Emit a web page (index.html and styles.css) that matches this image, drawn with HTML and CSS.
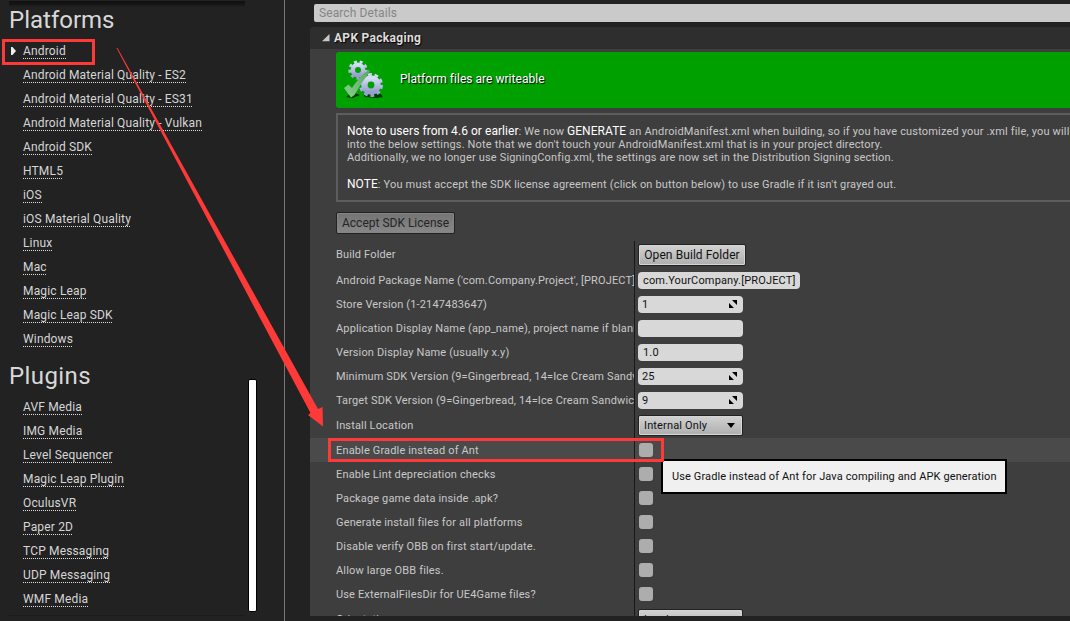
FILE: index.html
```html
<!DOCTYPE html>
<html lang="en">
<head>
<meta charset="utf-8">
<title>Project Settings - Android</title>
<link rel="stylesheet" href="styles.css">
</head>
<body>
<div class="app">
  <nav class="sidebar">
    <div class="nav">
      <h2 class="heading">Platforms</h2>
      <ul class="links">
        <li class="current"><a>Android</a></li>
        <li><a>Android Material Quality - ES2</a></li>
        <li><a>Android Material Quality - ES31</a></li>
        <li><a>Android Material Quality - Vulkan</a></li>
        <li><a>Android SDK</a></li>
        <li><a>HTML5</a></li>
        <li><a>iOS</a></li>
        <li><a>iOS Material Quality</a></li>
        <li><a>Linux</a></li>
        <li><a>Mac</a></li>
        <li><a>Magic Leap</a></li>
        <li><a>Magic Leap SDK</a></li>
        <li><a>Windows</a></li>
      </ul>
      <h2 class="heading">Plugins</h2>
      <ul class="links">
        <li><a>AVF Media</a></li>
        <li><a>IMG Media</a></li>
        <li><a>Level Sequencer</a></li>
        <li><a>Magic Leap Plugin</a></li>
        <li><a>OculusVR</a></li>
        <li><a>Paper 2D</a></li>
        <li><a>TCP Messaging</a></li>
        <li><a>UDP Messaging</a></li>
        <li><a>WMF Media</a></li>
      </ul>
    </div>
    <div class="scroll"><div class="thumb"></div></div>
  </nav>
  <main class="details">
    <div class="search">Search Details</div>
    <section class="category">
      <header class="cat-head">
        <svg class="expander" width="8" height="8" viewBox="0 0 8 8"><path d="M7.5 0V7.3H0Z" fill="#c8c8c8"/></svg>
        <span>APK Packaging</span>
      </header>
      <div class="banner">
        <svg class="gears" width="42" height="42" viewBox="0 0 42 42">
          <defs>
            <linearGradient id="steel" x1="0" y1="0" x2="0" y2="1"><stop offset="0" stop-color="#d5dcf6"/><stop offset="1" stop-color="#969fce"/></linearGradient>
            <linearGradient id="tick" x1="0" y1="1" x2="1" y2="0"><stop offset="0" stop-color="#86cf8c"/><stop offset="1" stop-color="#5da565"/></linearGradient>
          </defs>
          <path d="M3 38 9 33l8 3-7 3ZM20 35l18 0 2 3-6 1-12-1Z" fill="#003c08"/>
          <g fill="none" stroke="url(#steel)">
            <circle cx="15" cy="11" r="5.2" stroke-width="4.4"/>
            <circle cx="15" cy="11" r="8.4" stroke-width="2.6" stroke-dasharray="3 2.865"/>
            <circle cx="28" cy="26" r="6.6" stroke-width="6.4"/>
            <circle cx="28" cy="26" r="10.6" stroke-width="2.8" stroke-dasharray="3.8 2.860"/>
          </g>
          <path d="M1 29 5.500 25.500 9 29Q15 19 26 10.500L27 12.500Q18 24 11.500 36L8 38.500Z" fill="url(#tick)"/>
        </svg>
        <span>Platform files are writeable</span>
      </div>
      <div class="note">
        <p><b>Note to users from 4.6 or earlier</b>: We now <b>GENERATE</b> an AndroidManifest.xml when building, so if you have customized your .xml file, you will need to</p>
        <p>into the below settings. Note that we don't touch your AndroidManifest.xml that is in your project directory.</p>
        <p>Additionally, we no longer use SigningConfig.xml, the settings are now set in the Distribution Signing section.</p>
        <p class="gap"><b>NOTE</b>: You must accept the SDK license agreement (click on button below) to use Gradle if it isn't grayed out.</p>
      </div>
      <button class="btn disabled">Accept SDK License</button>
      <div class="props">
        <div class="row tall"><label>Build Folder</label><div class="val"><button class="btn">Open Build Folder</button></div></div>
        <div class="row"><label>Android Package Name ('com.Company.Project', [PROJECT]</label><div class="val"><div class="field wide">com.YourCompany.[PROJECT]</div></div></div>
        <div class="row"><label>Store Version (1-2147483647)</label><div class="val"><div class="field num">1<svg width="8" height="8" viewBox="0 0 8 8"><path d="M3 0H8V5ZM0 3V8H5Z"/></svg></div></div></div>
        <div class="row"><label>Application Display Name (app_name), project name if blank</label><div class="val"><div class="field"></div></div></div>
        <div class="row"><label>Version Display Name (usually x.y)</label><div class="val"><div class="field">1.0</div></div></div>
        <div class="row"><label>Minimum SDK Version (9=Gingerbread, 14=Ice Cream Sandw</label><div class="val"><div class="field num">25<svg width="8" height="8" viewBox="0 0 8 8"><path d="M3 0H8V5ZM0 3V8H5Z"/></svg></div></div></div>
        <div class="row"><label>Target SDK Version (9=Gingerbread, 14=Ice Cream Sandwich</label><div class="val"><div class="field num">9<svg width="8" height="8" viewBox="0 0 8 8"><path d="M3 0H8V5ZM0 3V8H5Z"/></svg></div></div></div>
        <div class="row mid"><label>Install Location</label><div class="val"><button class="combo">Internal Only<i></i></button></div></div>
        <div class="row hover"><label>Enable Gradle instead of Ant</label><div class="val"><span class="check"></span></div></div>
        <div class="row"><label>Enable Lint depreciation checks</label><div class="val"><span class="check"></span></div></div>
        <div class="row"><label>Package game data inside .apk?</label><div class="val"><span class="check"></span></div></div>
        <div class="row"><label>Generate install files for all platforms</label><div class="val"><span class="check"></span></div></div>
        <div class="row"><label>Disable verify OBB on first start/update.</label><div class="val"><span class="check"></span></div></div>
        <div class="row"><label>Allow large OBB files.</label><div class="val"><span class="check"></span></div></div>
        <div class="row"><label>Use ExternalFilesDir for UE4Game files?</label><div class="val"><span class="check"></span></div></div>
        <div class="row mid"><label>Orientation</label><div class="val"><button class="combo">Landscape<i></i></button></div></div>
      </div>
    </section>
  </main>
  <div class="tooltip">Use Gradle instead of Ant for Java compiling and APK generation</div>
  <svg class="marks" width="1070" height="621" viewBox="0 0 1070 621">
    <g fill="none" stroke="#fe3a38" stroke-width="3"><rect x="3.500" y="40.500" width="90" height="23"/><rect x="329.500" y="439.500" width="333" height="21"/></g>
    <path d="M116.500 48 117.500 48 318 409 322.500 407 323 426.500 308 415 310.500 413Z" fill="#fe3a38"/>
  </svg>
</div>
</body>
</html>
```
FILE: styles.css
```css
* { box-sizing: border-box; }
body { margin: 0; background: #222; font-family: Roboto, "Liberation Sans", sans-serif; }
p, h2, ul { margin: 0; padding: 0; font-weight: 400; }
button { font-family: inherit; margin: 0; }
.app { position: relative; display: flex; width: 1070px; height: 621px; overflow: hidden; background: #222; }

.sidebar { display: flex; justify-content: space-between; width: 285px; flex: none; border-right: 1px solid #777; padding: 0 27px 4px 9px; }
.nav { width: 236px; height: 616px; overflow: hidden; border-bottom: 1px solid #1b1b1b; background: linear-gradient(#222 1px, #101010 1px, #151515 4px, #222 7px); }
.heading { height: 44px; padding-top: 6px; line-height: 38px; font-size: 24px; letter-spacing: 0.4px; color: #d8d8d8; }
.heading:first-child { height: 39px; padding-top: 1px; letter-spacing: 0; }
.links { list-style: none; }
.links li { display: flex; align-items: center; height: 24px; padding-left: 14px; font-size: 12px; line-height: 14px; letter-spacing: 0.16px; color: #d6d6d6; white-space: nowrap; }
.links a { padding-bottom: 1px; background: repeating-linear-gradient(90deg, #e0e0e0 0 1px, transparent 1px 2px) left bottom / 100% 1px no-repeat; }
.links .current { padding-left: 2px; }
.current::before { content: ""; width: 5px; height: 8px; margin-right: 7px; background: #eee; clip-path: polygon(0 0, 30% 0, 100% 50%, 30% 100%, 0 100%); }
.scroll { width: 9px; padding-top: 379px; }
.thumb { width: 9px; height: 233px; border: 1px solid #000; border-radius: 2px; background: #fff; }

.details { flex: 1; min-width: 0; padding: 4px 0 0 25px; }
.search { height: 18px; margin-left: 4px; padding-left: 5px; background: #cacaca; border-radius: 2px 0 0 2px; font-size: 12px; line-height: 18px; letter-spacing: 0.1px; color: #858585; }
.category { height: 589px; margin-top: 5px; overflow: hidden; background: #3e3e3e; border-radius: 4px 0 0 0; }
.cat-head { display: flex; align-items: center; gap: 4px; height: 22px; padding-left: 12px; background: #2e2e2e; font-size: 12px; font-weight: 700; letter-spacing: 0.3px; color: #ddd; text-shadow: 1px 1px 1px #000; }
.banner { display: flex; align-items: center; height: 56px; margin: 3px 0 0 26px; padding-left: 7px; background: #00a000; border-radius: 3px 0 0 3px; font-size: 12px; color: #fff; text-shadow: 1px 1px 1px #000; }
.banner span { padding-bottom: 2px; letter-spacing: 0.03px; }
.gears { margin-right: 15px; }
.note { height: 89px; margin: 5px 0 0 26px; padding: 10px 0 0 9px; border: 2px solid #5d5d5d; border-right: 0; overflow: hidden; font-size: 11px; letter-spacing: 0.17px; color: #c8c8c8; white-space: nowrap; }
.note p { height: 13px; line-height: 14px; }
.note .gap { margin-top: 14px; }
.note b { font-size: 12px; line-height: 0; font-weight: 400; letter-spacing: 0.05px; color: #fff; }
.btn { display: block; height: 22px; padding: 0 5px; border: 1px solid #222; border-radius: 2px; background: linear-gradient(#d2d2d2, #aeaeae); box-shadow: inset 0 0 0 1px #d5d5d5; font-size: 12px; line-height: 18px; letter-spacing: 0.08px; color: #111; white-space: nowrap; }
.disabled { width: 119px; margin: 10px 0 0 26px; background: linear-gradient(#747474, #888); box-shadow: inset 0 0 0 1px #858585; letter-spacing: 0; color: #252525; }
.val .btn { width: 108px; }

.props { margin-top: 7px; }
.row { display: flex; height: 24px; align-items: stretch; font-size: 11px; letter-spacing: 0.15px; color: #c8c8c8; white-space: nowrap; }
.row.tall { height: 27px; }
.row.mid { height: 26px; }
.row.hover { background: #4a4a4a; }
.row label { width: 325px; padding: 1px 0 0 26px; overflow: hidden; display: flex; align-items: center; border-right: 1px solid #181818; }
.row.tall label { padding-top: 0; }
.val { display: flex; align-items: center; padding-left: 3px; }
.field { width: 105px; height: 17px; padding-left: 5px; border-radius: 4px; background: #d8d8d8; line-height: 17px; color: #111; }
.field.wide { width: 162px; }
.field.num { display: flex; justify-content: space-between; padding: 0 6px 0 4px; }
.field svg { margin-top: 4px; }
.combo { display: flex; align-items: center; justify-content: space-between; width: 105px; height: 21px; padding: 0 7px 0 5px; border: 1px solid #222; border-radius: 2px; background: linear-gradient(#d2d2d2, #aeaeae); box-shadow: inset 0 0 0 1px #d5d5d5; font-size: 11px; letter-spacing: 0.15px; color: #111; }
.combo i { border: 4px solid transparent; border-top: 5px solid #000; border-bottom: 0; }
.check { width: 14px; height: 14px; margin-left: 1px; border-radius: 3px; background: #adadad; }

.tooltip { position: absolute; left: 661px; top: 459px; width: 346px; height: 35px; padding-left: 9px; border: 2px solid #000; background: #f0f0f0; font-size: 11px; line-height: 31px; letter-spacing: 0.12px; color: #111; white-space: nowrap; }
.marks { position: absolute; left: 0; top: 0; pointer-events: none; }
```
